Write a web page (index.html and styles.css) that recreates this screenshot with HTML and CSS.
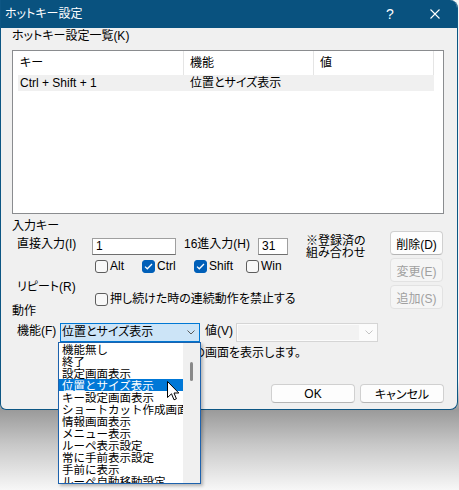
FILE: index.html
```html
<!DOCTYPE html>
<html lang="ja">
<head>
<meta charset="utf-8">
<title>ホットキー設定</title>
<link rel="stylesheet" href="styles.css">
</head>
<body>
<div class="window">
  <div class="titlebar">
    <span class="title">ホットキー設定</span>
    <span class="tb-help">?</span>
    <svg class="tb-close" width="10" height="10" viewBox="0 0 10 10"><path d="M0.5 0.5 L9.5 9.5 M9.5 0.5 L0.5 9.5" stroke="#fff" stroke-width="1.1" fill="none"/></svg>
  </div>
  <div class="content">
    <div class="lbl-section">ホットキー設定一覧(K)</div>
    <div class="listview">
      <div class="lv-header">
        <div class="col h1">キー</div>
        <div class="col h2">機能</div>
        <div class="col h3">値</div>
        <div class="h4"></div>
      </div>
      <div class="lv-row">
        <div class="r1">Ctrl + Shift + 1</div>
        <div class="r2">位置とサイズ表示</div>
      </div>
    </div>

    <div class="input-area">
      <div class="input-left">
        <div class="lbl-group">入力キー</div>
        <div class="row-direct">
          <span class="lbl lbl-direct">直接入力(I)</span>
          <div class="textbox tb-key">1</div>
          <span class="lbl lbl-hex">16進入力(H)</span>
          <div class="textbox tb-hex">31</div>
          <div class="note">※登録済の<br>組み合わせ</div>
        </div>
        <div class="row-checks">
          <label class="cb w-alt"><span class="box"></span><span class="cb-text">Alt</span></label>
          <label class="cb w-ctrl"><span class="box checked"><svg width="9" height="7" viewBox="0 0 9 7"><path d="M1 3.6 L3.3 5.8 L8 1" stroke="#fff" stroke-width="1.3" fill="none"/></svg></span><span class="cb-text">Ctrl</span></label>
          <label class="cb w-shift"><span class="box checked"><svg width="9" height="7" viewBox="0 0 9 7"><path d="M1 3.6 L3.3 5.8 L8 1" stroke="#fff" stroke-width="1.3" fill="none"/></svg></span><span class="cb-text">Shift</span></label>
          <label class="cb"><span class="box"></span><span class="cb-text">Win</span></label>
        </div>
        <div class="lbl-sub">リピート(R)</div>
        <div class="row-repeat">
          <label class="cb"><span class="box"></span><span class="cb-text">押し続けた時の連続動作を禁止する</span></label>
        </div>
        <div class="lbl-action">動作</div>
      </div>
      <div class="side-buttons">
        <div class="btn">削除(D)</div>
        <div class="btn disabled">変更(E)</div>
        <div class="btn disabled">追加(S)</div>
      </div>
    </div>

    <div class="row-func">
      <span class="lbl lbl-func">機能(F)</span>
      <div class="combo focused">
        <span class="combo-text">位置とサイズ表示</span>
        <svg class="chev" width="8" height="5" viewBox="0 0 8 5"><path d="M0.5 0.5 L4 4 L7.5 0.5" stroke="#5a5a5a" stroke-width="1" fill="none"/></svg>
      </div>
      <span class="lbl lbl-val">値(V)</span>
      <div class="combo disabled">
        <span class="combo-field"></span>
        <svg class="chev" width="8" height="5" viewBox="0 0 8 5"><path d="M0.5 0.5 L4 4 L7.5 0.5" stroke="#c4c4c4" stroke-width="1" fill="none"/></svg>
      </div>
    </div>

    <div class="desc"><span class="desc-pre">ウィンドウ位置とサイズの</span><span>画面を表示します。</span></div>

    <div class="footer">
      <div class="btn btn-foot">OK</div>
      <div class="btn btn-foot">キャンセル</div>
    </div>
  </div>
</div>

<div class="dropdown">
  <div class="dd-items">
    <div class="dd-item">機能無し</div>
    <div class="dd-item">終了</div>
    <div class="dd-item">設定画面表示</div>
    <div class="dd-item selected">位置とサイズ表示</div>
    <div class="dd-item">キー設定画面表示</div>
    <div class="dd-item">ショートカット作成画面表示</div>
    <div class="dd-item">情報画面表示</div>
    <div class="dd-item">メニュー表示</div>
    <div class="dd-item">ルーペ表示設定</div>
    <div class="dd-item">常に手前表示設定</div>
    <div class="dd-item">手前に表示</div>
    <div class="dd-item">ルーペ自動移動設定</div>
  </div>
  <div class="dd-scroll"><div class="dd-thumb"></div></div>
</div>

<svg class="cursor" width="13" height="20" viewBox="0 0 13 20"><path d="M0.5 0.5 L0.5 16.5 L4.5 12.8 L7 18.8 L9.4 17.8 L7 12 L11.8 12 Z" fill="#fff" stroke="#000" stroke-width="1" stroke-linejoin="miter"/></svg>
</body>
</html>
```

FILE: styles.css
```css
* { box-sizing: border-box; }
html, body { margin: 0; padding: 0; }
body {
  position: relative;
  width: 459px;
  height: 490px;
  overflow: hidden;
  background: linear-gradient(180deg, #f6f6f6 0, #f6f6f6 380px, #9a9a9a 410px, #c8c8c8 445px, #f7f7f7 490px);
  font-family: "Liberation Sans", "Noto Sans CJK JP", sans-serif;
  font-size: 12px;
  color: #000;
  font-feature-settings: "palt";
}

.window {
  width: 458px;
  height: 410px;
  background: #f0f0f0;
  border: 1px solid #0d5684;
  border-top: 0;
  border-radius: 0 8px 8px 6px;
  overflow: hidden;
  display: flex;
  flex-direction: column;
}

.titlebar {
  flex: none;
  height: 28px;
  background: #09527f;
  color: #fff;
  display: flex;
  align-items: center;
  padding: 0 17px 0 4px;
}
.title { flex: 1; line-height: 14px; }
.tb-help {
  width: 8px;
  margin-right: 36px;
  font-size: 14px;
  line-height: 14px;
  text-align: center;
}
.tb-close { display: block; }

.content {
  flex: 1;
  padding: 0 13px 6px 11px;
  display: flex;
  flex-direction: column;
}

.lbl-section { line-height: 16px; height: 16px; }

.listview {
  margin-top: 6px;
  height: 164px;
  border: 1px solid #8a8c8f;
  background: #fff;
  flex: none;
}
.lv-header { display: flex; height: 24px; }
.lv-header .col {
  border-right: 1px solid #e5e5e5;
  line-height: 24px;
  padding-left: 6px;
}
.h1 { width: 171px; padding-left: 7px !important; }
.h2 { width: 130px; }
.h3 { width: 120px; }
.h4 { flex: 1; }
.lv-row {
  display: flex;
  margin-left: 5px;
  width: 416px;
  height: 16px;
  line-height: 16px;
  background: #f0f0f0;
}
.r1 { width: 166px; padding-left: 2px; }
.r2 { padding-left: 6px; }

.input-area { display: flex; flex: none; }
.input-left { flex: 1; }
.lbl-group { margin-top: 4px; line-height: 16px; height: 16px; }

.row-direct {
  display: flex;
  align-items: flex-start;
  margin-top: 1px;
  height: 24px;
}
.lbl { line-height: 14px; }
.lbl-direct { margin: 2px 0 0 5px; width: 75px; }
.lbl-hex { margin: 2px 0 0 8px; width: 74px; }
.textbox {
  margin-top: 3px;
  height: 17px;
  background: #fff;
  border: 1px solid #9f9f9f;
  border-bottom-color: #6e6e6e;
  line-height: 15px;
  padding-left: 3px;
}
.tb-key { width: 84px; }
.tb-hex { width: 30px; }
.note { margin-left: 18px; line-height: 12px; }

.row-checks {
  display: flex;
  margin-top: 1px;
  height: 13px;
  padding-left: 83px;
}
.cb { display: flex; align-items: center; height: 13px; }
.w-alt { width: 47px; }
.w-ctrl, .w-shift { width: 52px; }
.box {
  width: 13px;
  height: 13px;
  border: 1px solid #5d5d5d;
  border-radius: 3px;
  background: #f8f8f8;
  display: flex;
  align-items: center;
  justify-content: center;
  flex: none;
}
.box.checked { background: #005fb8; border-color: #005fb8; }
.cb-text { margin-left: 2px; line-height: 13px; }

.lbl-sub { margin: 8px 0 0 5px; line-height: 12px; height: 12px; }
.row-repeat { height: 13px; padding-left: 83px; display: flex; }
.lbl-action { line-height: 10px; height: 10px; }

.side-buttons {
  width: 53px;
  margin-right: 1px;
  padding-top: 17px;
  display: flex;
  flex-direction: column;
  gap: 3px;
}
.btn {
  height: 24px;
  background: #fdfdfd;
  border: 1px solid #d0d0d0;
  border-bottom-color: #b5b5b5;
  border-radius: 4px;
  display: flex;
  align-items: center;
  justify-content: center;
}
.btn.disabled {
  background: #f5f5f5;
  border-color: #e2e2e2;
  color: #a0a0a0;
}

.row-func {
  margin-top: 7px;
  display: flex;
  align-items: flex-start;
  height: 19px;
}
.lbl-func { margin: 2px 0 0 5px; width: 43px; line-height: 12px; }
.lbl-val { margin: 2px 0 0 5px; width: 31px; line-height: 12px; }
.combo {
  height: 19px;
  display: flex;
  align-items: center;
  position: relative;
}
.combo.focused {
  width: 140px;
  background: #cce4f7;
  border: 1px solid #0078d4;
  padding-left: 1px;
}
.combo-text { flex: 1; line-height: 17px; }
.combo.focused .chev { margin-right: 4px; }
.combo.disabled {
  width: 142px;
  background: #fbfbfb;
  border: 1px solid #d5d5d5;
  padding: 1px;
}
.combo-field { width: 121px; height: 15px; background: #f2f2f2; }
.combo.disabled .chev { margin-left: 6px; }

.desc { margin: 4px 0 0 48px; line-height: 14px; display: flex; white-space: nowrap; }
.desc-pre { width: 145px; overflow: hidden; text-align: right; direction: rtl; }

.footer {
  margin-top: 24px;
  display: flex;
  justify-content: flex-end;
  gap: 5px;
}
.btn-foot { width: 84px; height: 19px; }

.dropdown {
  position: absolute;
  left: 58px;
  top: 342px;
  width: 143px;
  height: 142px;
  background: #fff;
  border: 1px solid #1d62ad;
  display: flex;
  box-shadow: 2px 2px 3px rgba(0, 0, 0, 0.25);
  font-family: "Noto Sans CJK JP", sans-serif;
  font-feature-settings: normal;
  font-size: 11.5px;
}
.dd-items { width: 124px; overflow: hidden; }
.dd-item {
  height: 12px;
  line-height: 12px;
  padding-left: 3px;
  white-space: nowrap;
  overflow: hidden;
}
.dd-item.selected { background: #0078d7; color: #fff; }
.dd-scroll { width: 17px; background: #f0f0f0; padding: 19px 0 0 7px; }
.dd-thumb { width: 3px; height: 19px; background: #8a8a8a; border-radius: 2px; }

.cursor { position: absolute; left: 167px; top: 381px; }
```
